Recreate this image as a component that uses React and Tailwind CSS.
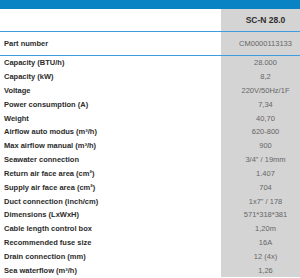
const specs = [
  ["Capacity (BTU/h)", "28.000"],
  ["Capacity (kW)", "8,2"],
  ["Voltage", "220V/50Hz/1F"],
  ["Power consumption (A)", "7,34"],
  ["Weight", "40,70"],
  ["Airflow auto modus (m³/h)", "620-800"],
  ["Max airflow manual (m³/h)", "900"],
  ["Seawater connection", "3/4\" / 19mm"],
  ["Return air face area (cm²)", "1.407"],
  ["Supply air face area (cm²)", "704"],
  ["Duct connection (inch/cm)", "1x7\" / 178"],
  ["Dimensions (LxWxH)", "571*318*381"],
  ["Cable length control box", "1,20m"],
  ["Recommended fuse size", "16A"],
  ["Drain connection (mm)", "12 (4x)"],
  ["Sea waterflow (m³/h)", "1,26"],
];

const App = () => {
  return (
    <div className="w-[300px] h-[278px] overflow-hidden bg-white font-['Liberation_Sans',Arial,sans-serif] text-[7.5px]">
      {/* Top bar */}
      <div className="h-[9px] bg-[#0a83c4]" />

      {/* Model header */}
      <div className="flex h-[22px]">
        <div className="w-[221px]" />
        <div className="flex-1 flex items-center justify-center pl-[10px] bg-[#d4d4d4] font-bold text-[8.5px] text-[#2e2e2e]">
          SC-N 28.0
        </div>
      </div>
      <div className="h-px bg-[#3d9be0]" />

      {/* Part number */}
      <div className="flex h-[23px]">
        <div className="w-[221px] flex items-center pl-[4px] font-bold text-[#2b2b2b]">
          Part number
        </div>
        <div className="flex-1 flex items-center justify-center pl-[10px] bg-[#d4d4d4] text-[#666]">
          CM0000113133
        </div>
      </div>
      <div className="h-px bg-[#3d9be0]" />

      {/* Specs */}
      {specs.map(([label, value]) => (
        <div key={label} className="flex h-[13.83px]">
          <div className="w-[221px] flex items-center pl-[4px] font-bold text-[#2b2b2b] whitespace-nowrap">
            {label}
          </div>
          <div className="flex-1 flex items-center justify-center pl-[10px] bg-[#d4d4d4] text-[#666] whitespace-nowrap">
            {value}
          </div>
        </div>
      ))}
    </div>
  );
};

export default App;
